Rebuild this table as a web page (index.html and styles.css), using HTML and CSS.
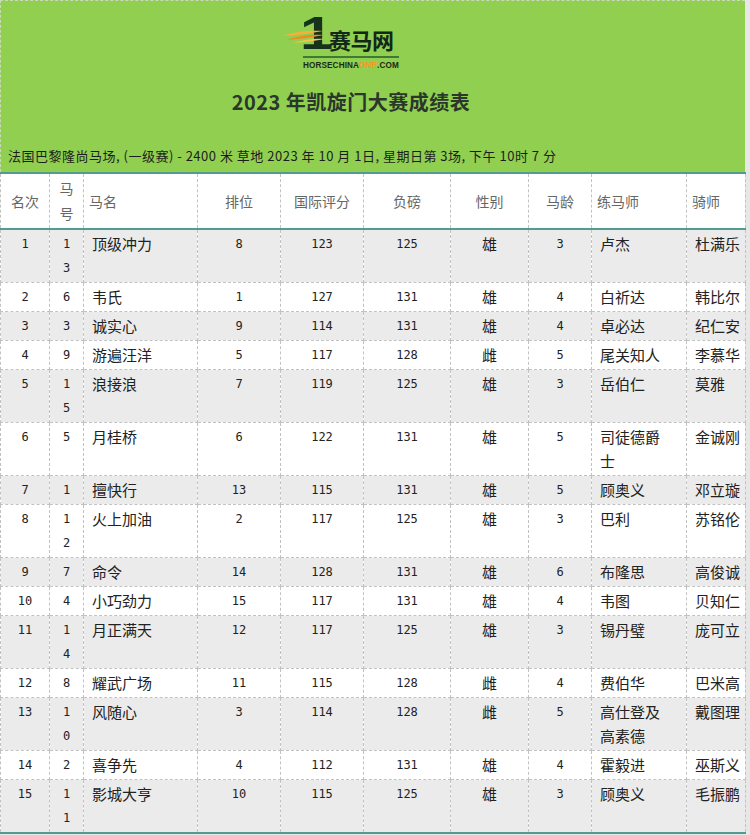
FILE: index.html
```html
<!DOCTYPE html>
<html lang="zh-CN">
<head>
<meta charset="utf-8">
<title>2023 年凯旋门大赛成绩表</title>
<link rel="stylesheet" href="styles.css">
</head>
<body>
<div class="page">
  <header class="head">
    <div class="head-center">
      <div class="logo">
        <div class="logo-row">
          <span class="logo-one">1</span>
          <svg class="swoosh" width="42" height="16" viewBox="0 0 42 16">
            <path d="M0 8 C10 4 24 2 40 3 C28 5 18 7 0 8 Z" fill="#f7b03a"/>
            <path d="M4 12 C14 8 26 6 41 7 C30 9 18 11 4 12 Z" fill="#f08c1e"/>
            <path d="M10 15 C20 12 30 10 42 11 C32 13 22 14 10 15 Z" fill="#f6c24a"/>
          </svg>
          <span class="logo-cn">赛马网</span>
        </div>
        <div class="logo-rule"></div>
        <div class="logo-en">HORSECHINA<span class="one">ONE</span>.COM</div>
      </div>
      <h1 class="title">2023 年凯旋门大赛成绩表</h1>
    </div>
    <p class="sub">法国巴黎隆尚马场, (一级赛) - 2400 米 草地 2023 年 10 月 1日, 星期日第 3场, 下午 10时 7 分</p>
  </header>
  <table class="results">
    <colgroup>
      <col class="c1"><col class="c2"><col class="c3"><col class="c4"><col class="c5">
      <col class="c6"><col class="c7"><col class="c8"><col class="c9"><col class="c10">
    </colgroup>
    <thead>
      <tr>
        <th>名次</th><th>马<br>号</th><th class="l">马名</th><th>排位</th><th>国际评分</th>
        <th>负磅</th><th>性别</th><th>马龄</th><th class="l">练马师</th><th class="l">骑师</th>
      </tr>
    </thead>
    <tbody>
      <tr class="alt"><td class="n">1</td><td class="n">1<br>3</td><td class="l">顶级冲力</td><td class="n">8</td><td class="n">123</td><td class="n">125</td><td>雄</td><td class="n">3</td><td class="l">卢杰</td><td class="l">杜满乐</td></tr>
      <tr><td class="n">2</td><td class="n">6</td><td class="l">韦氏</td><td class="n">1</td><td class="n">127</td><td class="n">131</td><td>雄</td><td class="n">4</td><td class="l">白祈达</td><td class="l">韩比尔</td></tr>
      <tr class="alt"><td class="n">3</td><td class="n">3</td><td class="l">诚实心</td><td class="n">9</td><td class="n">114</td><td class="n">131</td><td>雄</td><td class="n">4</td><td class="l">卓必达</td><td class="l">纪仁安</td></tr>
      <tr><td class="n">4</td><td class="n">9</td><td class="l">游遍汪洋</td><td class="n">5</td><td class="n">117</td><td class="n">128</td><td>雌</td><td class="n">5</td><td class="l">尾关知人</td><td class="l">李慕华</td></tr>
      <tr class="alt"><td class="n">5</td><td class="n">1<br>5</td><td class="l">浪接浪</td><td class="n">7</td><td class="n">119</td><td class="n">125</td><td>雄</td><td class="n">3</td><td class="l">岳伯仁</td><td class="l">莫雅</td></tr>
      <tr><td class="n">6</td><td class="n">5</td><td class="l">月桂桥</td><td class="n">6</td><td class="n">122</td><td class="n">131</td><td>雄</td><td class="n">5</td><td class="l">司徒德爵<br>士</td><td class="l">金诚刚</td></tr>
      <tr class="alt"><td class="n">7</td><td class="n">1</td><td class="l">擅快行</td><td class="n">13</td><td class="n">115</td><td class="n">131</td><td>雄</td><td class="n">5</td><td class="l">顾奥义</td><td class="l">邓立璇</td></tr>
      <tr><td class="n">8</td><td class="n">1<br>2</td><td class="l">火上加油</td><td class="n">2</td><td class="n">117</td><td class="n">125</td><td>雄</td><td class="n">3</td><td class="l">巴利</td><td class="l">苏铭伦</td></tr>
      <tr class="alt"><td class="n">9</td><td class="n">7</td><td class="l">命令</td><td class="n">14</td><td class="n">128</td><td class="n">131</td><td>雄</td><td class="n">6</td><td class="l">布隆思</td><td class="l">高俊诚</td></tr>
      <tr><td class="n">10</td><td class="n">4</td><td class="l">小巧劲力</td><td class="n">15</td><td class="n">117</td><td class="n">131</td><td>雄</td><td class="n">4</td><td class="l">韦图</td><td class="l">贝知仁</td></tr>
      <tr class="alt"><td class="n">11</td><td class="n">1<br>4</td><td class="l">月正满天</td><td class="n">12</td><td class="n">117</td><td class="n">125</td><td>雄</td><td class="n">3</td><td class="l">锡丹璧</td><td class="l">庞可立</td></tr>
      <tr><td class="n">12</td><td class="n">8</td><td class="l">耀武广场</td><td class="n">11</td><td class="n">115</td><td class="n">128</td><td>雌</td><td class="n">4</td><td class="l">费伯华</td><td class="l">巴米高</td></tr>
      <tr class="alt"><td class="n">13</td><td class="n">1<br>0</td><td class="l">风随心</td><td class="n">3</td><td class="n">114</td><td class="n">128</td><td>雌</td><td class="n">5</td><td class="l">高仕登及<br>高素德</td><td class="l">戴图理</td></tr>
      <tr><td class="n">14</td><td class="n">2</td><td class="l">喜争先</td><td class="n">4</td><td class="n">112</td><td class="n">131</td><td>雄</td><td class="n">4</td><td class="l">霍毅进</td><td class="l">巫斯义</td></tr>
      <tr class="alt"><td class="n">15</td><td class="n">1<br>1</td><td class="l">影城大亨</td><td class="n">10</td><td class="n">115</td><td class="n">125</td><td>雄</td><td class="n">3</td><td class="l">顾奥义</td><td class="l">毛振鹏</td></tr>
    </tbody>
  </table>
</div>
</body>
</html>
```

FILE: styles.css
```css
html, body {
  margin: 0;
  padding: 0;
}
body {
  background: #e7e7e7;
  font-family: "Noto Sans CJK SC", "Liberation Sans", sans-serif;
  color: #222;
}
.page {
  width: 745px;
  background: #fff;
}
.head {
  background: #90cf50;
  border-top: 1px dashed #c9d9b9;
  border-left: 1px dashed #c9d9b9;
  height: 172px;
  box-sizing: border-box;
  display: flex;
  flex-direction: column;
}
.head-center {
  width: 700px;
  display: flex;
  flex-direction: column;
  align-items: center;
}
.logo {
  margin-top: 13px;
  width: 96px;
  position: relative;
  display: flex;
  flex-direction: column;
}
.logo-row {
  display: flex;
  align-items: flex-end;
  height: 38px;
}
.logo-one {
  font-family: "Liberation Sans", sans-serif;
  font-weight: bold;
  font-size: 46px;
  line-height: 38px;
  color: #17321a;
  display: inline-block;
  width: 21px;
  transform: scaleX(1.3);
  transform-origin: left bottom;
  margin-left: -3px;
}
.swoosh {
  position: absolute;
  left: -20px;
  top: 14px;
}
.logo-cn {
  font-family: "Noto Sans CJK SC", sans-serif;
  font-weight: bold;
  font-size: 22px;
  line-height: 26px;
  color: #13261a;
  margin-left: 8px;
  letter-spacing: -0.5px;
}
.logo-rule {
  height: 2px;
  background: #3f7a34;
  margin-top: 4px;
}
.logo-en {
  font-family: "Liberation Sans", sans-serif;
  font-weight: bold;
  font-size: 8.2px;
  line-height: 10px;
  margin-top: 3px;
  color: #1c2a1c;
  letter-spacing: 0.1px;
  white-space: nowrap;
}
.logo-en .one {
  color: #f39a22;
}
.title {
  margin: 18px 0 0;
  font-family: "Noto Sans CJK SC", "Liberation Sans", sans-serif;
  font-size: 20px;
  line-height: 26px;
  font-weight: bold;
  color: #2b372b;
  letter-spacing: 0.5px;
}
.sub {
  margin: 32px 0 0 7px;
  font-size: 13px;
  line-height: 18px;
  color: #1d1d1d;
  white-space: nowrap;
  letter-spacing: 0.5px;
}
.results {
  width: 745px;
  table-layout: fixed;
  border-collapse: collapse;
}
.c1 { width: 49px; }
.c2 { width: 34px; }
.c3 { width: 114px; }
.c4 { width: 83px; }
.c5 { width: 83px; }
.c6 { width: 87px; }
.c7 { width: 78px; }
.c8 { width: 63px; }
.c9 { width: 95px; }
.c10 { width: 59px; }
.results th,
.results td {
  border: 1px dashed #c2c2c2;
  padding: 2px;
  text-align: center;
  overflow: hidden;
  white-space: nowrap;
}
.results thead tr {
  border-top: 2px solid #519c8f;
  border-bottom: 2px solid #519c8f;
}
.results th {
  font-weight: normal;
  font-size: 14px;
  line-height: 25px;
  color: #666;
  height: 54px;
  vertical-align: middle;
  padding-top: 0;
  padding-bottom: 0;
}
.results td {
  font-size: 15px;
  line-height: 24px;
  vertical-align: top;
  color: #222;
}
.results td.n {
  font-family: "DejaVu Sans Mono", "Liberation Mono", monospace;
  font-size: 12px;
  color: #222;
}
.results th.l {
  text-align: left;
  padding-left: 5px;
}
.results td.l {
  text-align: left;
  padding-left: 8px;
}
.results tbody tr.alt {
  background: #ebebeb;
}
.results tbody tr:last-child {
  border-bottom: 2px solid #519c8f;
}
```
